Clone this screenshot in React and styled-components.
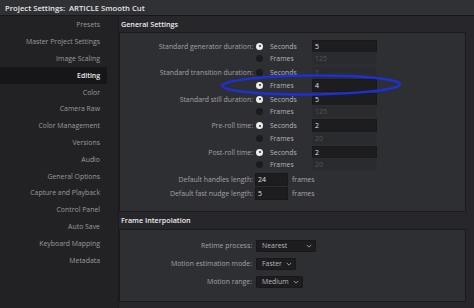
import React from "react";
import styled, { createGlobalStyle } from "styled-components";

const NAV = [
  "Presets",
  "Master Project Settings",
  "Image Scaling",
  "Editing",
  "Color",
  "Camera Raw",
  "Color Management",
  "Versions",
  "Audio",
  "General Options",
  "Capture and Playback",
  "Control Panel",
  "Auto Save",
  "Keyboard Mapping",
  "Metadata",
];

const DURATIONS = [
  { label: "Standard generator duration:", pick: "sec", sec: "5", fr: "125" },
  { label: "Standard transition duration:", pick: "fr", sec: "1", fr: "4" },
  { label: "Standard still duration:", pick: "sec", sec: "5", fr: "125" },
  { label: "Pre-roll time:", pick: "sec", sec: "2", fr: "20" },
  { label: "Post-roll time:", pick: "sec", sec: "2", fr: "20" },
];

const INTERP = [
  { label: "Retime process:", value: "Nearest", width: 60 },
  { label: "Motion estimation mode:", value: "Faster", width: 40 },
  { label: "Motion range:", value: "Medium", width: 47 },
];

const App = () => {
  return (
    <>
      <GlobalStyle />
      <Window>
        <TitleBar>Project Settings:&nbsp; ARTICLE Smooth Cut</TitleBar>
        <Body>
          <Sidebar>
            {NAV.map((item) => (
              <NavItem key={item} $active={item === "Editing"}>
                {item}
              </NavItem>
            ))}
          </Sidebar>

          <Main>
            <SectionTitle>General Settings</SectionTitle>
            <Panel $pad="7px 0 10px">
              {DURATIONS.map((d) => (
                <Group key={d.label}>
                  <Row>
                    <Label>{d.label}</Label>
                    <Radio $on={d.pick === "sec"} />
                    <RadioText>Seconds</RadioText>
                    <Field $off={d.pick !== "sec"}>{d.sec}</Field>
                  </Row>
                  <Row>
                    <Label />
                    <Radio $on={d.pick === "fr"} />
                    <RadioText>Frames</RadioText>
                    <Field $off={d.pick !== "fr"}>{d.fr}</Field>
                  </Row>
                </Group>
              ))}
              <LengthRow>
                <Label>Default handles length:</Label>
                <SmallField>24</SmallField>
                <Unit>frames</Unit>
              </LengthRow>
              <LengthRow>
                <Label>Default fast nudge length:</Label>
                <SmallField>5</SmallField>
                <Unit>frames</Unit>
              </LengthRow>
            </Panel>

            <SectionTitle $tall>Frame Interpolation</SectionTitle>
            <Panel $pad="7px 0 10px">
              {INTERP.map((r) => (
                <DropRow key={r.label}>
                  <Label $shift>{r.label}</Label>
                  <Dropdown style={{ width: r.width }}>
                    <span>{r.value}</span>
                    <Chevron viewBox="0 0 8 5">
                      <path d="M1 1l3 3 3-3" />
                    </Chevron>
                  </Dropdown>
                </DropRow>
              ))}
            </Panel>
          </Main>
        </Body>

        <Mark viewBox="0 0 184 24">
          <ellipse cx="92" cy="12" rx="89" ry="9.5" />
        </Mark>
      </Window>
    </>
  );
};

export default App;

const GlobalStyle = createGlobalStyle`
  html, body {
    margin: 0;
    padding: 0;
    background: #27272b;
  }
  body {
    font-family: "Open Sans", "DejaVu Sans", sans-serif;
  }
`;

const Window = styled.div`
  position: relative;
  width: 474px;
  height: 308px;
  display: flex;
  flex-direction: column;
  overflow: hidden;
  background: #27272b;
`;

const TitleBar = styled.div`
  height: 15px;
  flex: none;
  display: flex;
  align-items: center;
  padding-left: 5px;
  background: #303135;
  border-bottom: 1px solid #18181a;
  color: #e6e6e6;
  font-size: 7.7px;
  font-weight: 600;
  white-space: pre;
`;

const Body = styled.div`
  flex: 1;
  display: flex;
  min-height: 0;
`;

const Sidebar = styled.div`
  width: 107px;
  padding-right: 11px;
  flex: none;
  background: #222225;
  border-right: 1px solid #1a1a1c;
  padding-top: 0.6px;
`;

const NavItem = styled.div`
  height: 16.8px;
  display: flex;
  align-items: center;
  justify-content: flex-end;
  padding-right: 7px;
  font-size: 6.9px;
  white-space: nowrap;
  color: ${(p) => (p.$active ? "#ececec" : "#9a9a9c")};
  font-weight: ${(p) => (p.$active ? 600 : 400)};
  background: ${(p) => (p.$active ? "#161618" : "transparent")};
`;

const Main = styled.div`
  flex: 1;
  display: flex;
  flex-direction: column;
  padding-right: 8px;
  background: #27272b;
`;

const SectionTitle = styled.div`
  height: ${(p) => (p.$tall ? 17 : 16)}px;
  display: flex;
  align-items: center;
  padding-left: 2px;
  color: #ececec;
  font-size: 7.2px;
  font-weight: 600;
`;

const Panel = styled.div`
  padding: ${(p) => p.$pad};
  background: #2e2f33;
  border: 1px solid #1b1b1e;
`;

const Group = styled.div`
  margin-bottom: 1.5px;
`;

const Row = styled.div`
  height: 12.5px;
  display: flex;
  align-items: center;
`;

const LengthRow = styled.div`
  height: 14px;
  display: flex;
  align-items: center;
`;

const DropRow = styled.div`
  height: 18px;
  display: flex;
  align-items: center;
`;

const Label = styled.div`
  width: ${(p) => (p.$shift ? 132 : 133)}px;
  flex: none;
  text-align: right;
  color: #a2a2a4;
  font-size: 6.9px;
  white-space: nowrap;
`;

const Radio = styled.span`
  position: relative;
  width: 7px;
  height: 7px;
  margin-left: 3px;
  flex: none;
  border-radius: 50%;
  background: ${(p) => (p.$on ? "#ededed" : "#1b1b1d")};

  &::after {
    content: "";
    position: absolute;
    left: 2.5px;
    top: 2.5px;
    width: 2px;
    height: 2px;
    border-radius: 50%;
    background: ${(p) => (p.$on ? "#2a2a2c" : "transparent")};
  }
`;

const RadioText = styled.span`
  width: 42px;
  margin-left: 7px;
  flex: none;
  color: #b4b4b6;
  font-size: 6.9px;
`;

const Field = styled.div`
  width: 61px;
  height: 11px;
  display: flex;
  align-items: center;
  padding-left: 2px;
  font-size: 6.9px;
  color: ${(p) => (p.$off ? "#55565a" : "#e0e0e0")};
  background: ${(p) => (p.$off ? "#2a2b2f" : "#1d1d20")};
  border: 1px solid ${(p) => (p.$off ? "#2c2d31" : "#19191b")};
`;

const SmallField = styled(Field)`
  width: 29px;
  margin-left: 2px;
`;

const Unit = styled.span`
  margin-left: 4px;
  color: #a8a8aa;
  font-size: 6.9px;
`;

const Dropdown = styled.div`
  height: 12px;
  margin-left: 4px;
  display: flex;
  align-items: center;
  justify-content: space-between;
  padding: 0 3px 0 5px;
  box-sizing: border-box;
  background: #1d1d20;
  border: 1px solid #18181a;
  border-radius: 1px;
  color: #b8b8ba;
  font-size: 6.9px;
`;

const Chevron = styled.svg`
  width: 6px;
  height: 4px;
  margin-left: 3px;
  fill: none;
  stroke: #b0b0b2;
  stroke-width: 1.1;
`;

const Mark = styled.svg`
  position: absolute;
  left: 219px;
  top: 73px;
  width: 184px;
  height: 24px;
  overflow: visible;
  transform: rotate(-0.5deg);

  ellipse {
    fill: none;
    stroke: #1d2fd9;
    stroke-width: 2.4;
  }
`;
